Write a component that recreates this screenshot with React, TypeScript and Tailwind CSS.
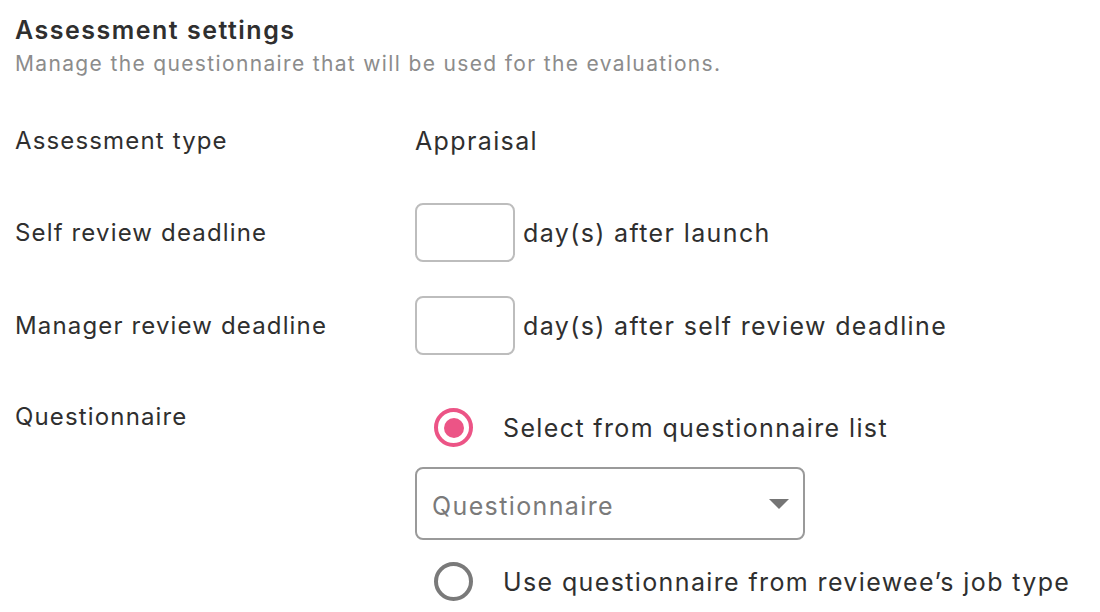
import { useState } from "react";

function Radio({ checked }: { checked: boolean }) {
  return checked ? (
    <span className="flex h-[39px] w-[39px] shrink-0 items-center justify-center rounded-full border-[4px] border-[#ec5486]">
      <span className="h-[20px] w-[20px] rounded-full bg-[#ec5486]" />
    </span>
  ) : (
    <span className="h-[39px] w-[39px] shrink-0 rounded-full border-[4px] border-[#7a7a7a]" />
  );
}

const label = "text-[24px] leading-[32px] tracking-[1.15px]";
const value = "text-[25px] leading-[32px] tracking-[1.375px]";

export default function App() {
  const [mode, setMode] = useState<"list" | "job">("list");

  return (
    <div className="min-h-screen bg-white px-[15px] pt-[14px] text-[#2f2f2f] font-['Inter',sans-serif]">
      <h1 className="text-[25px] leading-[32px] font-semibold tracking-[1.5px]">Assessment settings</h1>
      <p className="mt-[4px] text-[21px] leading-[28px] tracking-[1.35px] text-[#8c8c8c]">
        Manage the questionnaire that will be used for the evaluations.
      </p>

      <div className="mt-[47px] grid grid-cols-[400px_1fr] items-center">
        <div className={label}>Assessment type</div>
        <div className={value}>Appraisal</div>
      </div>

      <div className="mt-[46px] grid grid-cols-[400px_1fr] items-center">
        <div className={label}>Self review deadline</div>
        <div className="flex items-center gap-[8px]">
          <input className="h-[59px] w-[100px] rounded-[8px] border-2 border-[#bdbdbd] outline-none" />
          <span className={value}>day(s) after launch</span>
        </div>
      </div>

      <div className="mt-[34px] grid grid-cols-[400px_1fr] items-center">
        <div className={label}>Manager review deadline</div>
        <div className="flex items-center gap-[8px]">
          <input className="h-[59px] w-[100px] rounded-[8px] border-2 border-[#bdbdbd] outline-none" />
          <span className={value}>day(s) after self review deadline</span>
        </div>
      </div>

      <div className="mt-[46px] grid grid-cols-[400px_1fr] items-start">
        <div className={label}>Questionnaire</div>
        <div className="flex flex-col pt-[7px]">
          <button
            onClick={() => setMode("list")}
            className="ml-[19px] flex items-center gap-[30px] text-left"
          >
            <Radio checked={mode === "list"} />
            <span className={value}>Select from questionnaire list</span>
          </button>
          <div className="mt-[20px] flex h-[73px] w-[390px] items-center justify-between rounded-[8px] border-2 border-[#9a9a9a] pl-[15px] pr-[14px]">
            <span className={`${value} pt-[4px] text-[#7a7a7a]`}>Questionnaire</span>
            <svg width="20" height="10" viewBox="0 0 20 10">
              <path d="M0 0h20L10 10z" fill="#757575" />
            </svg>
          </div>
          <button
            onClick={() => setMode("job")}
            className="ml-[19px] mt-[22px] flex items-center gap-[30px] text-left"
          >
            <Radio checked={mode === "job"} />
            <span className={value}>Use questionnaire from reviewee’s job type</span>
          </button>
        </div>
      </div>
    </div>
  );
}
